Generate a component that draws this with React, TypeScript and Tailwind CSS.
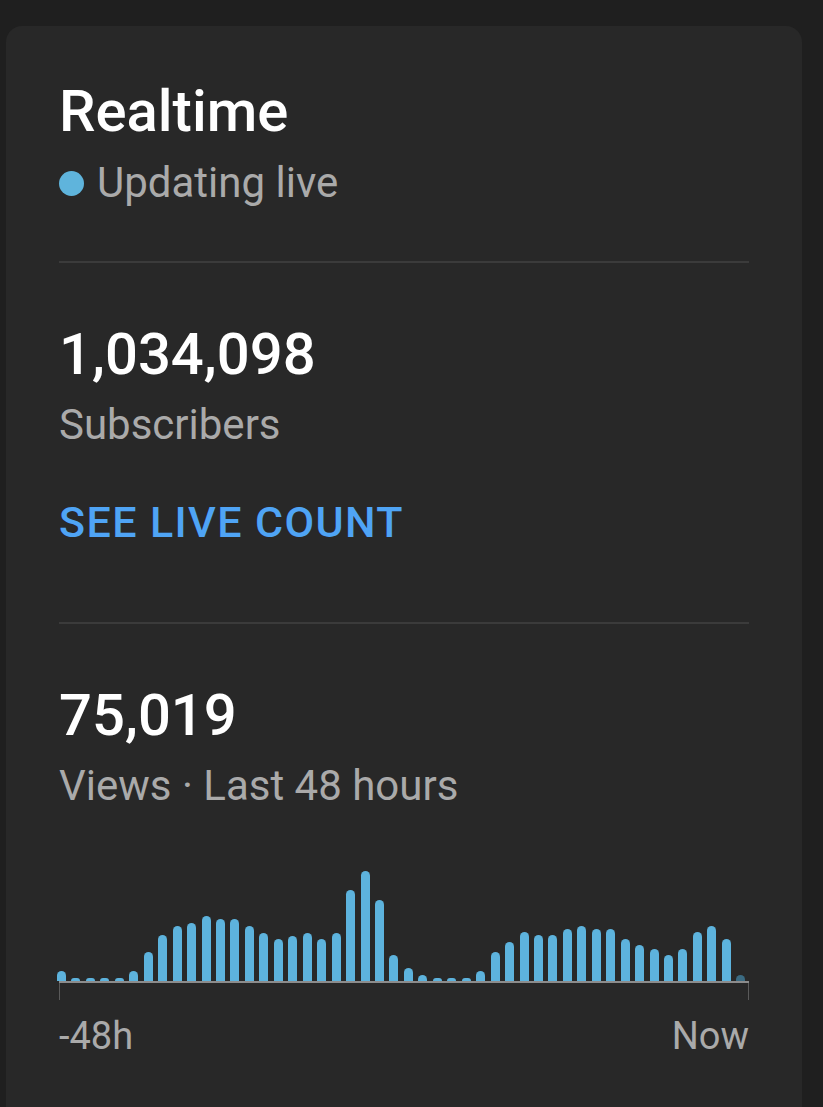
import React from "react";

const bars: number[] = [
  10, 3, 3, 3, 3, 10, 29, 46, 55, 58, 65, 62, 62, 55, 48, 42, 45, 48, 42, 48, 91, 110, 81, 26,
  13, 6, 3, 3, 3, 10, 29, 39, 49, 46, 46, 52, 55, 52, 52, 42, 36, 32, 26, 32, 49, 55, 42, 6,
];

const Divider: React.FC<{ className?: string }> = ({ className = "" }) => (
  <div className={`h-[2px] bg-[#3b3b3b] ${className}`} />
);

export default function App() {
  return (
    <div
      className="min-h-screen bg-[#1f1f1f] pt-[26px] pl-[6px] overflow-hidden"
      style={{ fontFamily: "Roboto, 'Noto Sans', sans-serif" }}
    >
      <div className="w-[796px] h-[1100px] rounded-[16px] bg-[#282828] px-[53px] pt-[51px]">
        <div className="text-[58px] leading-[68px] font-medium text-white">Realtime</div>
        <div className="mt-[13px] flex items-center gap-[13px] text-[42px] leading-[50px] text-[#aaaaaa]">
          <span className="w-[25px] h-[25px] rounded-full bg-[#5fb4dc]" />
          <span>Updating live</span>
        </div>

        <Divider className="mt-[53px]" />

        <div className="mt-[57px] text-[58px] leading-[68px] font-medium text-white">1,034,098</div>
        <div className="mt-[12px] text-[42px] leading-[50px] text-[#aaaaaa]">Subscribers</div>
        <button className="mt-[47px] block text-[43px] leading-[50px] font-medium tracking-[1.4px] text-[#4fa4f5]">
          SEE LIVE COUNT
        </button>

        <Divider className="mt-[75px]" />

        <div className="mt-[57px] text-[58px] leading-[68px] font-medium text-white">75,019</div>
        <div className="mt-[12px] text-[42px] leading-[50px] text-[#aaaaaa]">Views · Last 48 hours</div>

        <div className="mt-[50px]">
          <div className="-ml-[2px] w-[689px] h-[120px] flex items-end justify-between">
            {bars.map((h, i) => (
              <div
                key={i}
                className={`w-[9px] rounded-t-full ${i === bars.length - 1 ? "bg-[#3b6b82]" : "bg-[#5db3dd]"}`}
                style={{ height: h }}
              />
            ))}
          </div>
          <div className="h-[2px] bg-[#8c8c8c]" />
          <div className="h-[17px] flex justify-between">
            <div className="w-px bg-[#5a5a5a]" />
            <div className="w-px bg-[#5a5a5a]" />
          </div>
          <div className="mt-[14px] flex justify-between text-[38px] leading-[44px] text-[#aaaaaa]">
            <span>-48h</span>
            <span>Now</span>
          </div>
        </div>
      </div>
    </div>
  );
}
